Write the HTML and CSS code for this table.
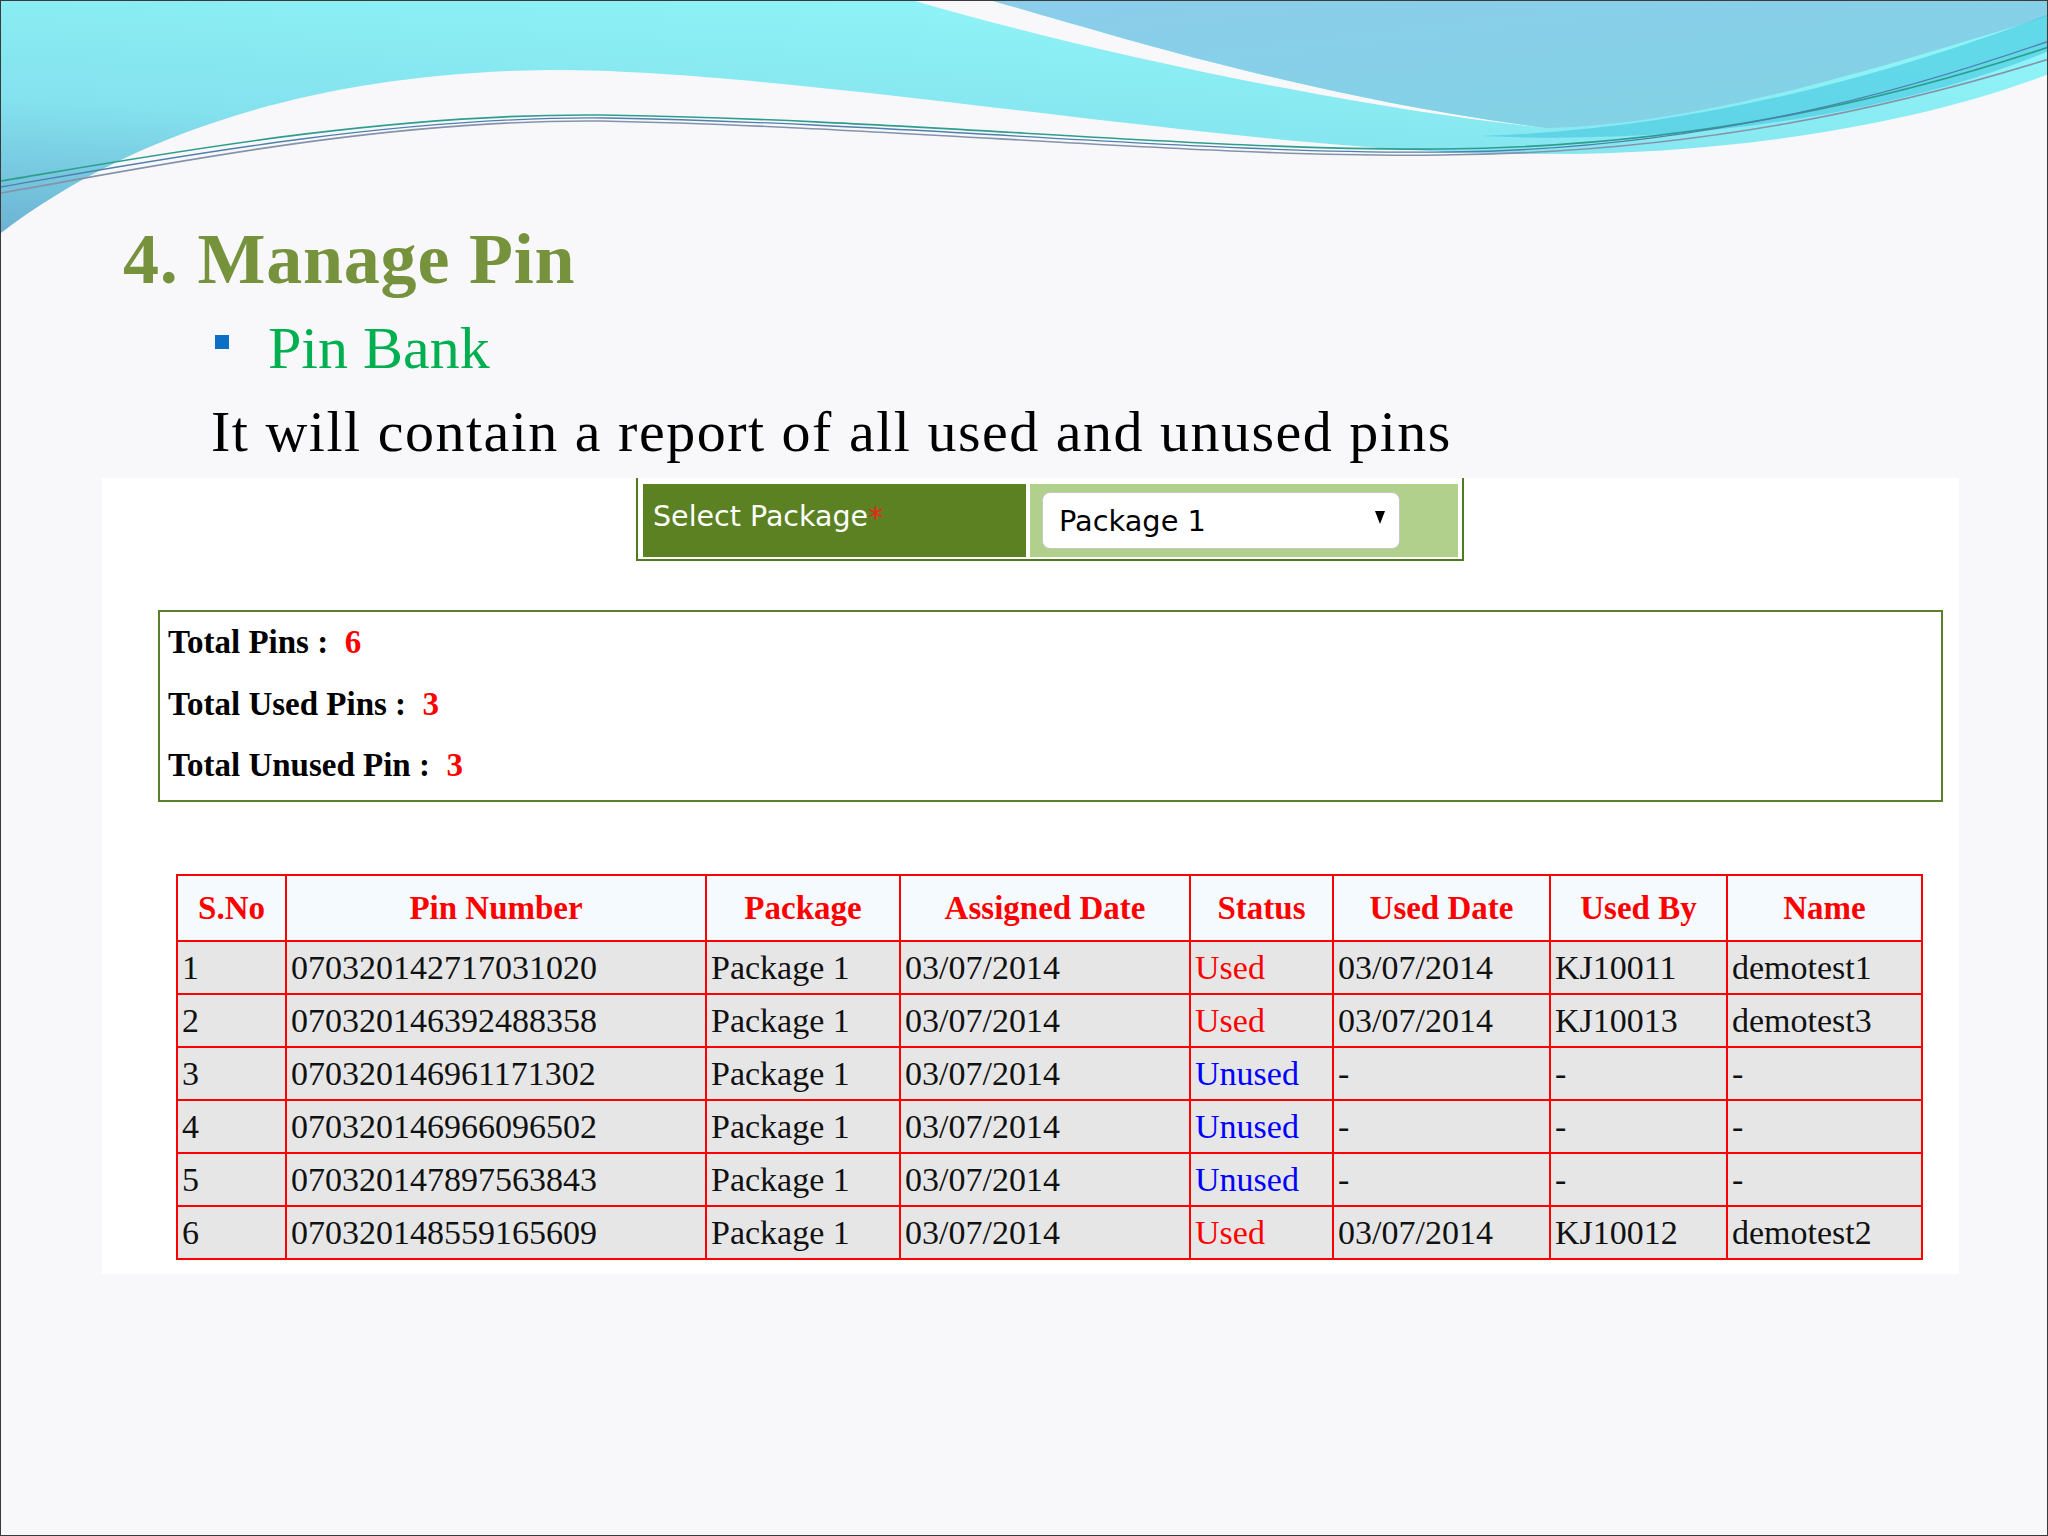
FILE: index.html
```html
<!DOCTYPE html>
<html>
<head>
<meta charset="utf-8">
<title>Manage Pin</title>
<link rel="stylesheet" href="styles.css">
</head>
<body>
<div class="slide">
  <svg class="wave" width="2048" height="260" viewBox="0 0 2048 260" xmlns="http://www.w3.org/2000/svg">
    <defs>
      <linearGradient id="gCyan" x1="0.55" y1="0" x2="0" y2="1">
        <stop offset="0" stop-color="#8ff4f7"/>
        <stop offset="0.55" stop-color="#84e2ee"/>
        <stop offset="1" stop-color="#6cb2d3"/>
      </linearGradient>
      <linearGradient id="gBlue" x1="0" y1="0" x2="1" y2="1">
        <stop offset="0" stop-color="#8ccdeb"/>
        <stop offset="1" stop-color="#80d3e4"/>
      </linearGradient>
    </defs>
    <path fill="url(#gCyan)" d="M0,0 H2048 V73 C1900,130 1700,155 1527,153 C1250,153 800,68 548,69 C300,72 120,140 0,232 Z"/>
    <path fill="#f8f8fa" d="M914,0 L992,0 C1100,30 1300,95 1545,127 C1380,110 1120,60 914,0 Z"/>
    <path fill="url(#gBlue)" d="M992,0 H2048 V15 C1900,60 1700,125 1545,127 C1300,95 1100,30 992,0 Z"/>
    <path fill="#3ec3df" fill-opacity="0.55" d="M1480,135 C1700,128 1900,70 2048,13 V50 C1900,110 1700,145 1480,135 Z"/>
    <path fill="none" stroke="#2e9e8c" stroke-width="1.6" d="M0,180 C150,155 380,112 600,114 C900,118 1200,150 1440,148 C1700,146 1900,95 2048,46"/>
    <path fill="none" stroke="#4f7fae" stroke-width="1.3" d="M0,186 C150,160 390,115 605,117 C905,122 1210,154 1450,151 C1710,148 1910,88 2048,40"/>
    <path fill="none" stroke="#8593aa" stroke-width="1.6" d="M0,192 C150,166 380,118 600,120 C900,126 1200,157 1440,154 C1700,152 1900,104 2048,58"/>
  </svg>

  <div class="content">
    <h1 class="title">4. Manage Pin</h1>
    <div class="bullet-row">
      <span class="bullet"></span>
      <span class="bullet-text">Pin Bank</span>
    </div>
    <p class="desc">It will contain a report of all used and unused pins</p>

    <div class="shot">
      <div class="select-bar">
        <div class="sel-label">Select Package<span class="req">*</span></div>
        <div class="sel-value">
          <div class="select">
            <span>Package 1</span>
            <svg class="arrow" width="10" height="13" viewBox="0 0 10 13"><polygon points="0,0 10,0 5,13" fill="#000"/></svg>
          </div>
        </div>
      </div>

      <div class="stats">
        <div class="stat">Total Pins :&nbsp; <span class="num">6</span></div>
        <div class="stat">Total Used Pins :&nbsp; <span class="num">3</span></div>
        <div class="stat">Total Unused Pin :&nbsp; <span class="num">3</span></div>
      </div>

      <table class="pins">
        <colgroup>
          <col class="c-sno">
          <col class="c-pin">
          <col class="c-pkg">
          <col class="c-adate">
          <col class="c-status">
          <col class="c-udate">
          <col class="c-by">
          <col class="c-name">
        </colgroup>
        <thead>
          <tr>
            <th>S.No</th>
            <th>Pin Number</th>
            <th>Package</th>
            <th>Assigned Date</th>
            <th>Status</th>
            <th>Used Date</th>
            <th>Used By</th>
            <th>Name</th>
          </tr>
        </thead>
        <tbody>
          <tr><td>1</td><td>070320142717031020</td><td>Package 1</td><td>03/07/2014</td><td class="used">Used</td><td>03/07/2014</td><td>KJ10011</td><td>demotest1</td></tr>
          <tr><td>2</td><td>070320146392488358</td><td>Package 1</td><td>03/07/2014</td><td class="used">Used</td><td>03/07/2014</td><td>KJ10013</td><td>demotest3</td></tr>
          <tr><td>3</td><td>070320146961171302</td><td>Package 1</td><td>03/07/2014</td><td class="unused">Unused</td><td>-</td><td>-</td><td>-</td></tr>
          <tr><td>4</td><td>070320146966096502</td><td>Package 1</td><td>03/07/2014</td><td class="unused">Unused</td><td>-</td><td>-</td><td>-</td></tr>
          <tr><td>5</td><td>070320147897563843</td><td>Package 1</td><td>03/07/2014</td><td class="unused">Unused</td><td>-</td><td>-</td><td>-</td></tr>
          <tr><td>6</td><td>070320148559165609</td><td>Package 1</td><td>03/07/2014</td><td class="used">Used</td><td>03/07/2014</td><td>KJ10012</td><td>demotest2</td></tr>
        </tbody>
      </table>
    </div>
  </div>
</div>
</body>
</html>
```

FILE: styles.css
```css
html, body {
  margin: 0;
  padding: 0;
}

.slide {
  width: 2048px;
  height: 1536px;
  box-sizing: border-box;
  border: 1px solid #3a3a3a;
  background: #f8f8fa;
  position: relative;
  overflow: hidden;
  font-family: "Liberation Serif", "Times New Roman", serif;
}

.wave {
  position: absolute;
  top: 0;
  left: 0;
}

.content {
  position: relative;
  padding-top: 223px;
}

.title {
  margin: 0 0 0 122px;
  font-size: 72px;
  line-height: 71px;
  letter-spacing: 0.8px;
  font-weight: bold;
  color: #76923c;
}

.bullet-row {
  display: flex;
  align-items: flex-start;
  margin-top: 23px;
  padding-left: 214px;
  height: 60px;
}

.bullet {
  width: 14px;
  height: 14px;
  margin-top: 17px;
  background: #0b6fc6;
}

.bullet-text {
  margin-left: 39px;
  font-size: 60px;
  line-height: 60px;
  color: #00b050;
}

.desc {
  margin: 25px 0 0 210px;
  font-size: 58px;
  line-height: 58px;
  letter-spacing: 1.5px;
  color: #000;
}

.shot {
  margin: 17px 0 0 101px;
  width: 1857px;
  height: 796px;
  box-sizing: border-box;
  background: #fff;
  display: flex;
  flex-direction: column;
  align-items: flex-start;
}

/* select package bar */
.select-bar {
  margin-left: 534px;
  display: flex;
  gap: 4px;
  padding: 6px 4px 2px 5px;
  border: 2px solid #4d7b1e;
  border-top: 0;
}

.sel-label {
  width: 383px;
  height: 73px;
  box-sizing: border-box;
  padding-left: 10px;
  background: #5b8122;
  color: #fff;
  font-family: "DejaVu Sans", Verdana, sans-serif;
  font-size: 28.5px;
  line-height: 66px;
}

.req {
  color: #e8261a;
  font-size: 30px;
  vertical-align: -2px;
}

.sel-value {
  width: 428px;
  height: 73px;
  box-sizing: border-box;
  padding: 8px 0 0 12px;
  background: #b0d08c;
}

.select {
  width: 358px;
  height: 57px;
  box-sizing: border-box;
  display: flex;
  align-items: center;
  justify-content: space-between;
  padding: 0 14px 0 16px;
  background: #fff;
  border: 1px solid #c6c6c6;
  border-radius: 8px;
  font-family: "DejaVu Sans", Verdana, sans-serif;
  font-size: 28.8px;
  color: #000;
}

.arrow {
  margin-bottom: 6px;
}

/* stats box */
.stats {
  margin: 49px 0 0 56px;
  width: 1785px;
  height: 192px;
  box-sizing: border-box;
  border: 2px solid #5b7f2a;
  padding-left: 8px;
  font-weight: bold;
  font-size: 33px;
  line-height: 61.5px;
  color: #000;
}

.num {
  color: #ff0000;
}

/* table */
.pins {
  margin: 72px 0 0 74px;
  width: 1745px;
  border-collapse: collapse;
  table-layout: fixed;
  border: 2px solid #ff0000;
  font-size: 34px;
}

.c-sno { width: 109px; }
.c-pin { width: 420px; }
.c-pkg { width: 194px; }
.c-adate { width: 290px; }
.c-status { width: 143px; }
.c-udate { width: 217px; }
.c-by { width: 177px; }
.c-name { width: 195px; }

.pins th,
.pins td {
  border: 2px solid #ff0000;
  padding: 0 0 0 4px;
  white-space: nowrap;
  overflow: hidden;
}

.pins th {
  height: 64px;
  padding: 0;
  background: #f4fafd;
  color: #ff0000;
  font-weight: bold;
  font-size: 33px;
  text-align: center;
}

.pins td {
  height: 51px;
  background: #e6e6e6;
  color: #111;
  text-align: left;
}

.pins td.used {
  color: #ff0000;
}

.pins td.unused {
  color: #0000ff;
}
```
